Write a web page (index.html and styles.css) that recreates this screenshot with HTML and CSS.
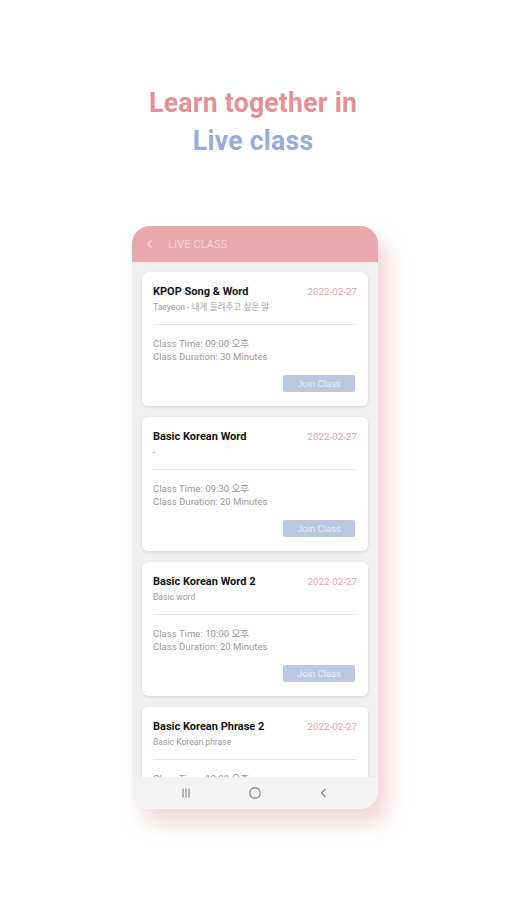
FILE: index.html
```html
<!DOCTYPE html>
<html>
<head>
<meta charset="utf-8">
<link rel="stylesheet" href="styles.css">
</head>
<body>
<div class="page">
  <h1 class="title"><span class="t1">Learn together in</span><span class="t2">Live class</span></h1>
  <div class="phone">
    <div class="appbar">
      <svg class="back" width="8" height="10" viewBox="0 0 8 10"><path d="M5.5 1.5 L2 5 L5.5 8.5" fill="none" stroke="#f7d9da" stroke-width="1.6"/></svg>
      <span class="appbar-title">LIVE CLASS</span>
    </div>
    <div class="content">
      <div class="card">
        <div class="head"><span class="name">KPOP Song &amp; Word</span><span class="date">2022-02-27</span></div>
        <div class="sub">Taeyeon - 내게 들려주고 싶은 말</div>
        <div class="divider"></div>
        <div class="info">Class Time: 09:00 오후</div>
        <div class="info">Class Duration: 30 Minutes</div>
        <div class="actions"><span class="btn">Join Class</span></div>
      </div>
      <div class="card">
        <div class="head"><span class="name">Basic Korean Word</span><span class="date">2022-02-27</span></div>
        <div class="sub">-</div>
        <div class="divider"></div>
        <div class="info">Class Time: 09:30 오후</div>
        <div class="info">Class Duration: 20 Minutes</div>
        <div class="actions"><span class="btn">Join Class</span></div>
      </div>
      <div class="card">
        <div class="head"><span class="name">Basic Korean Word 2</span><span class="date">2022-02-27</span></div>
        <div class="sub">Basic word</div>
        <div class="divider"></div>
        <div class="info">Class Time: 10:00 오후</div>
        <div class="info">Class Duration: 20 Minutes</div>
        <div class="actions"><span class="btn">Join Class</span></div>
      </div>
      <div class="card">
        <div class="head"><span class="name">Basic Korean Phrase 2</span><span class="date">2022-02-27</span></div>
        <div class="sub">Basic Korean phrase</div>
        <div class="divider"></div>
        <div class="info">Class Time: 10:30 오후</div>
        <div class="info">Class Duration: 20 Minutes</div>
        <div class="actions"><span class="btn">Join Class</span></div>
      </div>
    </div>
    <div class="navbar">
      <svg width="12" height="12" viewBox="0 0 12 12"><path d="M3 1.5V10.5M6 1.5V10.5M9 1.5V10.5" stroke="#8a8a8a" stroke-width="1.2"/></svg>
      <svg width="14" height="14" viewBox="0 0 14 14"><rect x="2" y="2" width="10" height="10" rx="4" fill="none" stroke="#8a8a8a" stroke-width="1.3"/></svg>
      <svg width="12" height="12" viewBox="0 0 12 12"><path d="M7.5 2 L3.5 6 L7.5 10" fill="none" stroke="#8a8a8a" stroke-width="1.3"/></svg>
    </div>
  </div>
</div>
</body>
</html>
```
FILE: styles.css
```css
html, body { margin: 0; padding: 0; background: #fff; }
body { width: 507px; height: 900px; overflow: hidden; font-family: Roboto, "Noto Sans CJK KR", sans-serif; }
.page { display: flex; flex-direction: column; align-items: center; padding-top: 84px; }
.title { margin: 0; display: flex; flex-direction: column; align-items: center; font-family: Roboto, sans-serif; font-weight: 700; font-size: 27px; line-height: 38px; letter-spacing: 0.3px; transform: scaleX(0.98); }
.t1 { color: #e39094; }
.t2 { color: #98acd8; }
.phone { margin-top: 66px; margin-left: 3px; width: 246px; height: 583px; border-radius: 18px; overflow: hidden; background: #efefef; display: flex; flex-direction: column; box-shadow: 10px 14px 22px rgba(226, 160, 165, 0.45); }
.appbar { height: 36px; flex: none; background: #e9a8aa; display: flex; align-items: center; padding-left: 14px; gap: 14px; }
.appbar-title { color: #f6d2d3; font-size: 11px; letter-spacing: 0.1px; }
.content { flex: 1; overflow: hidden; padding: 10px 10px 0 10px; display: flex; flex-direction: column; gap: 11px; }
.card { flex: none; background: #fff; border-radius: 6px; padding: 12px 11px 14px 11px; box-shadow: 0 1px 3px rgba(0,0,0,0.12); }
.head { display: flex; justify-content: space-between; align-items: center; height: 14px; }
.name { font-weight: 700; font-size: 11px; color: #141414; }
.date { font-size: 9.8px; color: #e6a3a6; }
.sub { margin-top: 3px; font-size: 8.6px; line-height: 12px; height: 12px; color: #9e9e9e; }
.divider { margin-top: 11px; height: 1px; background: #e6e6e6; }
.info { font-size: 9.6px; line-height: 13px; color: #9a9a9a; }
.divider + .info { margin-top: 12px; }
.actions { display: flex; justify-content: flex-end; margin-top: 12px; padding-right: 2px; }
.btn { width: 72px; height: 17px; border-radius: 2px; background: #b9c9e1; color: #e8eef7; font-size: 9.5px; display: flex; align-items: center; justify-content: center; }
.navbar { height: 32px; flex: none; background: #f4f4f4; display: flex; align-items: center; justify-content: space-between; padding: 0 48px 0 48px; }
```
